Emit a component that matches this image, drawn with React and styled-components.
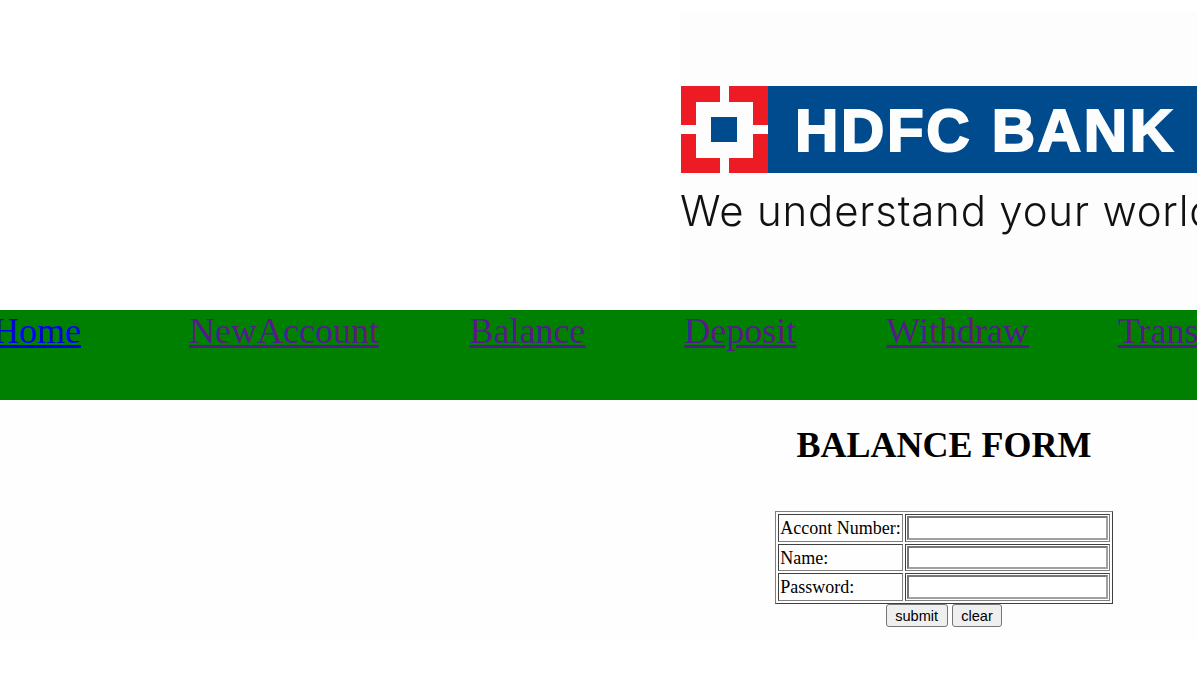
import React from "react";
import styled, { createGlobalStyle } from "styled-components";

const GlobalStyle = createGlobalStyle`
  html, body {
    margin: 0;
    height: 100%;
    overflow: hidden;
    background: #ffffff;
    font-family: "Liberation Serif", "Times New Roman", serif;
  }
`;

const Header = styled.header`
  height: 310px;
  padding: 12px 0 0 680px;
  box-sizing: border-box;
  overflow: hidden;
`;

const Logo = styled.svg`
  display: block;
  filter: blur(0.45px);
`;

const Nav = styled.nav`
  height: 90px;
  background: #008000;
  display: flex;
  padding-top: 1px;
  box-sizing: border-box;
  overflow: hidden;
  white-space: nowrap;
`;

const NavLink = styled.a`
  flex: none;
  height: 41px;
  font-size: 36px;
  line-height: 41px;
  margin-left: ${(p) => p.$left}px;
  color: ${(p) => (p.$visited ? "#551a8b" : "#0000ee")};
  text-decoration: underline;
  cursor: pointer;
`;

const Main = styled.main`
  padding-left: 691px;
  height: 240px;
  box-sizing: border-box;
  display: flex;
  flex-direction: column;
  align-items: center;
  background: #fefefe;
`;

const Title = styled.h1`
  margin: 25px 0 45px;
  font-size: 36px;
  line-height: 41px;
  font-weight: bold;
  color: #000;
`;

const FormTable = styled.table`
  border: 1px solid #808080;
  border-color: #808080 #404040 #404040 #808080;
  border-spacing: 2px;
  font-size: 18px;
  color: #000;
`;

const Cell = styled.td`
  border: 1px solid #404040;
  border-color: #404040 #808080 #808080 #404040;
  padding: 1px;
`;

const LabelCell = styled(Cell)`
  padding: 2px 1px 0;
`;

const Field = styled.input`
  display: block;
  width: 201px;
  height: 23.5px;
  box-sizing: border-box;
  border: 2px solid;
  border-color: #767676 #a0a0a0 #a0a0a0 #767676;
  padding: 1px 2px;
  background: #fff;
`;

const Buttons = styled.div`
  display: flex;
  gap: 4px;
`;

const Button = styled.button`
  height: 23px;
  box-sizing: border-box;
  padding: 2px 8.5px 0;
  font-family: "Liberation Sans", Arial, sans-serif;
  font-size: 14.6px;
  color: #000;
  background: #efefef;
  border: 1px solid #767676;
  border-radius: 3px;
`;

const links = [
  { label: "Home", left: -7 },
  { label: "NewAccount", left: 108, visited: true },
  { label: "Balance", left: 90.5, visited: true },
  { label: "Deposit", left: 99, visited: true },
  { label: "Withdraw", left: 90, visited: true },
  { label: "Transfer", left: 89, visited: true },
];

const fields = [
  { label: "Accont Number:", type: "text" },
  { label: "Name:", type: "text" },
  { label: "Password:", type: "password" },
];

const HdfcLogo = () => (
  <Logo width="517" height="298" viewBox="0 0 517 298">
    <rect width="517" height="298" fill="#fdfdfd" />
    <rect x="1" y="74" width="87" height="87" fill="#ed1c24" />
    <rect x="88" y="74" width="429" height="87" fill="#004b8d" />
    <rect x="16" y="90" width="57" height="56" fill="#fdfdfd" />
    <rect x="40" y="74" width="9" height="87" fill="#fdfdfd" />
    <rect x="1" y="113" width="87" height="9" fill="#fdfdfd" />
    <rect x="31" y="105" width="26" height="25" fill="#004b8d" />
    <text
      x="115"
      y="139"
      fontFamily="Liberation Sans"
      fontWeight="700"
      fontSize="60"
      textLength="378"
      lengthAdjust="spacing"
      fill="#fdfdfd"
      stroke="#fdfdfd"
      strokeWidth="2"
    >
      HDFC BANK
    </text>
    <text
      x="0"
      y="214"
      fontFamily="Inter"
      fontWeight="300"
      fontSize="42"
      letterSpacing="0.8"
      fill="#111"
    >
      We understand your world
    </text>
  </Logo>
);

export default function App() {
  return (
    <>
      <GlobalStyle />
      <Header>
        <HdfcLogo />
      </Header>
      <Nav>
        {links.map((link) => (
          <NavLink key={link.label} href="#" $left={link.left} $visited={link.visited}>
            {link.label}
          </NavLink>
        ))}
      </Nav>
      <Main>
        <Title>BALANCE FORM</Title>
        <FormTable>
          <tbody>
            {fields.map((field) => (
              <tr key={field.label}>
                <LabelCell>{field.label}</LabelCell>
                <Cell>
                  <Field type={field.type} />
                </Cell>
              </tr>
            ))}
          </tbody>
        </FormTable>
        <Buttons>
          <Button type="submit">submit</Button>
          <Button type="reset">clear</Button>
        </Buttons>
      </Main>
    </>
  );
}
